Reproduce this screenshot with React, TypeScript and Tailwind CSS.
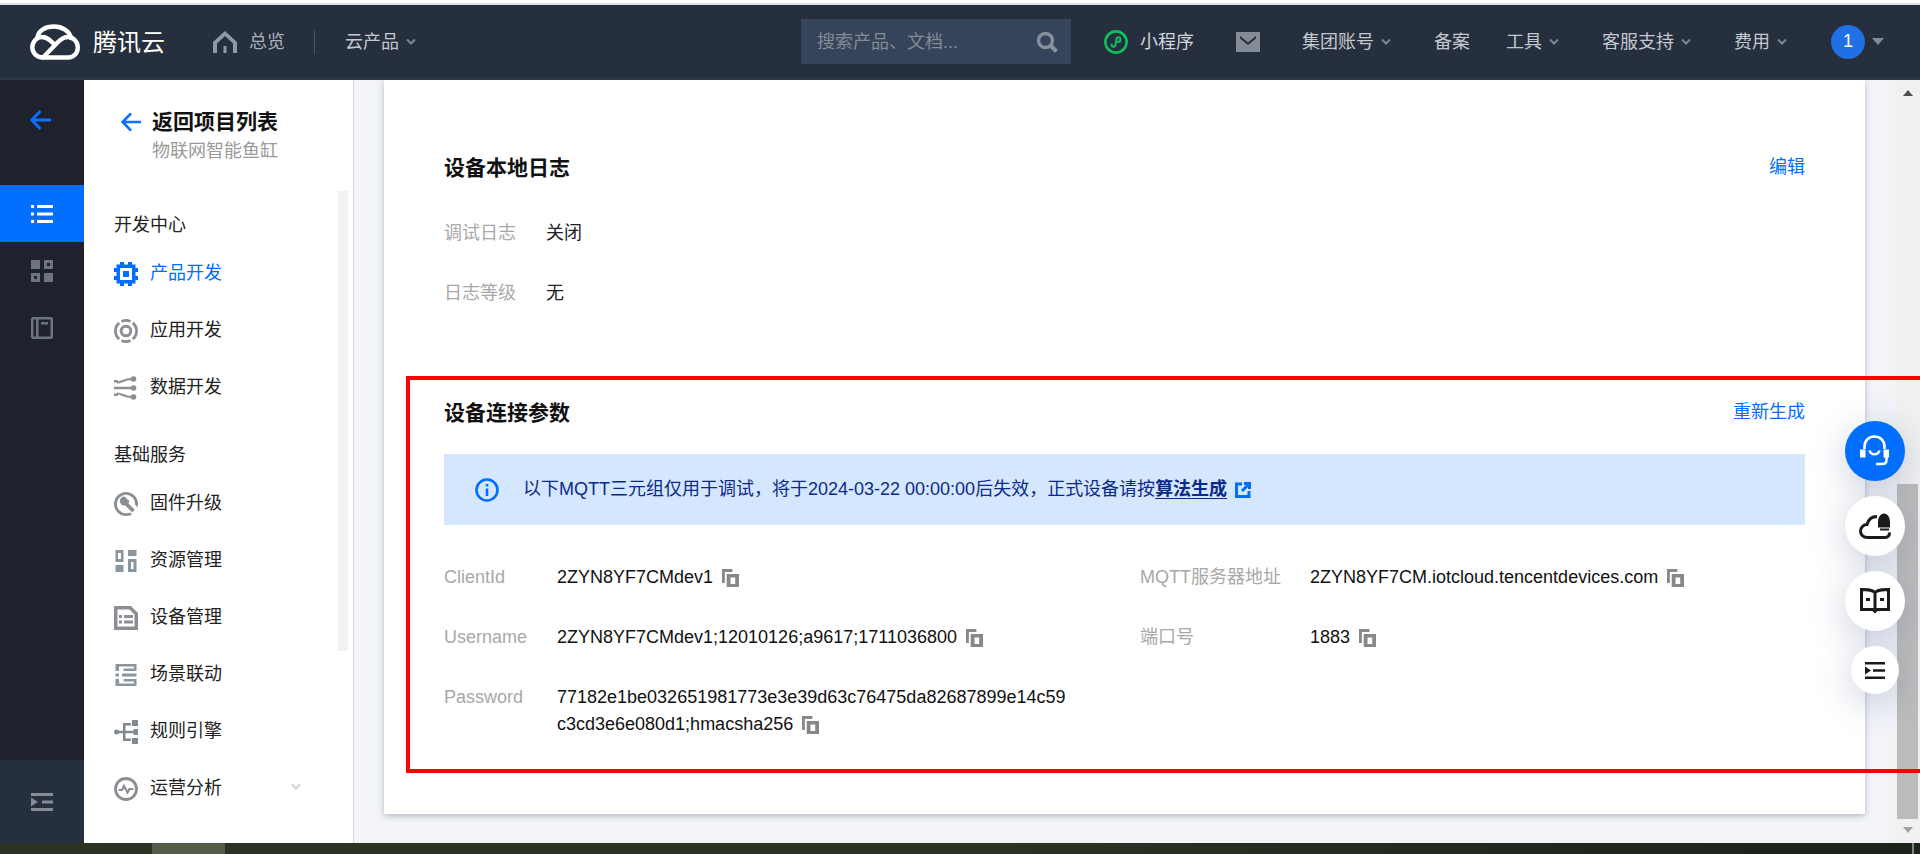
import type { ReactNode } from "react";

const FONT = "[font-family:'Liberation_Sans','Noto_Sans_CJK_SC',sans-serif]";

function Chevron({ className = "" }: { className?: string }) {
  return (
    <svg viewBox="0 0 10 8" className={`h-[8px] w-[10px] shrink-0 ${className}`} fill="none" stroke="currentColor" strokeWidth="2">
      <path d="M1 1.5 5 5.5 9 1.5" />
    </svg>
  );
}

function TopLink({ label, ml, chevron = true }: { label: string; ml: string; chevron?: boolean }) {
  return (
    <div className={`flex items-center ${ml}`}>
      <span className="pt-[2px] text-[18px] leading-[27px] text-[#c3c8d0]">{label}</span>
      {chevron && <Chevron className="ml-[7px] text-[#7d8693]" />}
    </div>
  );
}

function Header() {
  return (
    <header className="flex h-[75px] shrink-0 items-center border-b-2 border-[#2c3646] bg-[#262f3e] pl-[30px]">
      <svg viewBox="0 0 50 36" className="h-[36px] w-[50px] shrink-0" fill="none" stroke="#fff" strokeWidth="4.4" strokeLinecap="round">
        <path d="M7.500 12.500C9 6 16 2.500 24 2.500C32 2.500 39.500 7 41 14" />
        <path d="M13 33.500H38C44 33.500 47.800 29 47.800 23.500C47.800 17.500 43 13 38 13C34 13 31 15 28 18L13 33.500" />
        <path d="M13 33.500C7 33.500 2.300 29 2.300 23.500C2.300 17.500 7 13 12 13C17 13 20 16 24 20" />
      </svg>
      <span className="ml-[13px] pt-[3px] text-[24px] leading-[36px] text-white">腾讯云</span>
      <svg viewBox="0 0 24 22" className="ml-[48px] h-[22px] w-[24px] shrink-0" fill="#8f98a5">
        <path fillRule="evenodd" d="M12 0 24 11V22H20V12.500L12 5 4 12.500V22H0V11ZM10.500 15H13.500V22H10.500Z" />
      </svg>
      <span className="ml-[12px] pt-[2px] text-[18px] leading-[27px] text-[#a9b0ba]">总览</span>
      <div className="ml-[29px] h-[24px] w-px bg-[#4a5361]" />
      <TopLink label="云产品" ml="ml-[30px]" />
      <div className="ml-[385px] flex h-[45px] w-[270px] shrink-0 items-center justify-between bg-[#35445b] pl-[16px] pr-[13px]">
        <span className="pt-[2px] text-[18px] leading-[27px] text-[#858b94]">搜索产品、文档...</span>
        <svg viewBox="0 0 22 22" className="h-[22px] w-[22px]" fill="none" stroke="#87909b" strokeWidth="3.400">
          <circle cx="9.500" cy="9.500" r="7" />
          <path d="m14.500 14.500 6 6" strokeWidth="4" />
        </svg>
      </div>
      <svg viewBox="0 0 24 24" className="ml-[33px] h-[24px] w-[24px] shrink-0" fill="none">
        <circle cx="12" cy="12" r="10.600" stroke="#0dc15f" strokeWidth="2.600" />
        <path d="M7.500 14.500C7.500 17 10.500 17.500 11.500 15.500L12.500 8.500C13.500 6.500 16.500 7 16.500 9.500C16.500 11 15.500 12 14 12" stroke="#0dc15f" strokeWidth="2" strokeLinecap="round" />
      </svg>
      <span className="ml-[12px] pt-[2px] text-[18px] leading-[27px] text-[#d3d6db]">小程序</span>
      <svg viewBox="0 0 24 20" className="ml-[42px] h-[20px] w-[24px] shrink-0" fill="#848c97">
        <path fillRule="evenodd" d="M0 0H24V20H0ZM4 4 12 10.500 20 4V6.500L12 13 4 6.500Z" />
      </svg>
      <TopLink label="集团账号" ml="ml-[42px]" />
      <TopLink label="备案" ml="ml-[43px]" chevron={false} />
      <TopLink label="工具" ml="ml-[36px]" />
      <TopLink label="客服支持" ml="ml-[43px]" />
      <TopLink label="费用" ml="ml-[43px]" />
      <div className="ml-[44px] flex h-[34px] w-[34px] shrink-0 items-center justify-center rounded-full bg-[#1f6fe5] text-[18px] text-white">1</div>
      <div className="ml-[7px] h-0 w-0 border-x-[6px] border-t-[7px] border-x-transparent border-t-[#858c96]" />
    </header>
  );
}

function Rail() {
  return (
    <aside className="flex w-[84px] shrink-0 flex-col bg-[#1e222d]">
      <div className="flex h-[105px] shrink-0 items-center justify-center pb-[25px] pr-[3px]">
        <svg viewBox="0 0 22 20" className="h-[20px] w-[22px]" fill="none" stroke="#0f6fff" strokeWidth="2.800">
          <path d="M21 10H2M10.500 1 1.800 10l8.700 9" />
        </svg>
      </div>
      <div className="flex h-[57px] shrink-0 items-center justify-center bg-[#006eff]">
        <svg viewBox="0 0 22 18" className="h-[18px] w-[22px]" fill="#fff">
          <path d="M0 0H3V3H0ZM6 0H22V3H6ZM0 7.500H3V10.500H0ZM6 7.500H22V10.500H6ZM0 15H3V18H0ZM6 15H22V18H6Z" />
        </svg>
      </div>
      <div className="flex h-[57px] shrink-0 items-center justify-center">
        <svg viewBox="0 0 22 22" className="h-[22px] w-[22px]" fill="#6d747e">
          <path d="M0 0H9V9H0ZM13 13H22V22H13Z" />
          <path fillRule="evenodd" d="M13 0H22V9H13ZM16 3V6H19V3ZM0 13H9V22H0ZM3 16V19H6V16Z" />
        </svg>
      </div>
      <div className="flex h-[57px] shrink-0 items-center justify-center">
        <svg viewBox="0 0 22 22" className="h-[22px] w-[22px]" fill="#6d747e">
          <path fillRule="evenodd" d="M1.500 0H20.500L22 1.500V20.500L20.500 22H1.500L0 20.500V1.500ZM2.500 2.500V19.500H5V2.500ZM7.500 2.500V19.500H19.500V2.500ZM10 5H17V7.500H10Z" />
        </svg>
      </div>
      <div className="mt-auto flex h-[83px] shrink-0 items-center justify-center bg-[#262f3e]">
        <svg viewBox="0 0 22 18" className="h-[18px] w-[22px]" fill="#858c96">
          <path d="M0 0H22V3H0ZM0 15H22V18H0ZM0 4.500 7 9 0 13.500ZM11 7.500H22V10.500H11Z" />
        </svg>
      </div>
    </aside>
  );
}

const icons: Record<string, ReactNode> = {
  chip: (
    <svg viewBox="0 0 24 24" className="h-[24px] w-[24px]" fill="#006eff">
      <path fillRule="evenodd" d="M2.500 2.500H21.500V21.500H2.500ZM6 6V18H18V6ZM9 9H15V15H9ZM6 0H10V2.500H6ZM14 0H18V2.500H14ZM6 21.500H10V24H6ZM14 21.500H18V24H14ZM0 6H2.500V10H0ZM0 14H2.500V18H0ZM21.500 6H24V10H21.500ZM21.500 14H24V18H21.500Z" />
    </svg>
  ),
  ring: (
    <svg viewBox="0 0 24 24" className="h-[24px] w-[24px]" fill="none" stroke="#8b8f94">
      <circle cx="12" cy="12" r="4.800" strokeWidth="3" />
      <path d="M5.200 3.900A10.600 10.600 0 0 0 5.200 20.100M18.800 3.900A10.600 10.600 0 0 1 18.800 20.100M7.500 2.400A10.600 10.600 0 0 1 16.500 2.400M7.500 21.600A10.600 10.600 0 0 0 16.500 21.600" strokeWidth="2.800" />
    </svg>
  ),
  flow: (
    <svg viewBox="0 0 24 24" className="h-[24px] w-[24px]" fill="#8b8f94">
      <circle cx="19.500" cy="3" r="2.800" />
      <circle cx="19.500" cy="12" r="2.800" />
      <circle cx="19.500" cy="21" r="2.800" />
      <path d="M0 4H4V6.500H0ZM0 10.700H18V13.300H0ZM0 17.500H4V20H0Z" />
      <path d="M3 6.500C9 6.500 9 3 18 3M3 17.500C9 17.500 9 21 18 21" fill="none" stroke="#8b8f94" strokeWidth="2.200" />
    </svg>
  ),
  wrench: (
    <svg viewBox="0 0 24 24" className="h-[24px] w-[24px]" fill="none" stroke="#8b8f94">
      <circle cx="12" cy="12" r="10.600" strokeWidth="2.800" />
      <path d="M10 8 22 20" stroke="#fff" strokeWidth="9" />
      <path d="M10 9.500 19.500 19" strokeWidth="3.800" />
      <circle cx="10.500" cy="9" r="4.600" fill="#8b8f94" stroke="none" />
      <path d="M11 3 15 7.500" stroke="#fff" strokeWidth="2.400" />
    </svg>
  ),
  blocks: (
    <svg viewBox="0 0 24 24" className="h-[24px] w-[24px]" fill="#8b959e">
      <path fillRule="evenodd" d="M1.500 1H9.500V13H1.500ZM4 4V10H7V4ZM14 1H22.500V7H14ZM1.500 16H9.500V23H1.500ZM14 10H22.500V23H14ZM17 13V20H19.500V13Z" />
    </svg>
  ),
  device: (
    <svg viewBox="0 0 24 24" className="h-[24px] w-[24px]" fill="#8b8f94">
      <path fillRule="evenodd" d="M0 0H17L24 7V24H0ZM3.500 3.500V20.500H20.500V8.500L15.500 3.500ZM5 9H8V12H5ZM10 9H19V12H10ZM5 14.500H8V17.500H5ZM10 14.500H19V17.500H10Z" />
    </svg>
  ),
  scene: (
    <svg viewBox="0 0 24 24" className="h-[24px] w-[24px]" fill="#8b959e">
      <path fillRule="evenodd" d="M1.500 1H5V8H1.500ZM1.500 16H5V23H1.500ZM1.500 10.500H5V13.500H1.500ZM5 1H22.500V8H9.500V5.500H20V3.500H5ZM5 16H22.500V23H5V20.500H20V18.500H9.500V16ZM8 10.500H22.500V13.500H8Z" />
    </svg>
  ),
  tree: (
    <svg viewBox="0 0 24 24" className="h-[24px] w-[24px]" fill="#7f8a93">
      <circle cx="2.500" cy="12" r="2.500" />
      <path d="M2 10.700H22V13.300H2ZM9 3H17V5.500H11.500V18.500H17V21H9Z" />
      <path d="M18 0H24V6H18ZM18 18H24V24H18ZM19.500 9H24V15H19.500Z" />
    </svg>
  ),
  pulse: (
    <svg viewBox="0 0 24 24" className="h-[24px] w-[24px]" fill="none" stroke="#8b8f94">
      <circle cx="12" cy="12" r="10.500" strokeWidth="2.800" />
      <path d="M4.500 13H8L10 9 13.500 15.500 15.500 12H19.500" strokeWidth="2.200" />
    </svg>
  ),
};

function NavItem({ icon, label, active, chevron }: { icon: string; label: string; active?: boolean; chevron?: boolean }) {
  return (
    <div className="flex h-[57px] items-center pl-[30px]">
      {icons[icon]}
      <span className={`ml-[12px] text-[18px] leading-[27px] ${active ? "text-[#006eff]" : "text-[#222]"}`}>{label}</span>
      {chevron && <Chevron className="mb-[4px] ml-[69px] text-[#cfd1d4]" />}
    </div>
  );
}

function NavPanel() {
  return (
    <nav className="relative w-[270px] shrink-0 border-r border-[#d5d7dc] bg-white">
      <div className="absolute right-[5px] top-[111px] h-[460px] w-[10px] bg-[#f2f2f2]" />
      <div className="flex items-center pl-[37px] pt-[28px]">
        <svg viewBox="0 0 22 20" className="h-[20px] w-[21px] shrink-0" fill="none" stroke="#0f6fff" strokeWidth="2.800">
          <path d="M21 10H2M10.500 1 1.800 10l8.700 9" />
        </svg>
        <span className="ml-[10px] text-[21px] font-bold leading-[28px] text-[#111]">返回项目列表</span>
      </div>
      <div className="mt-[2px] pl-[68px] text-[18px] leading-[27px] text-[#999]">物联网智能鱼缸</div>
      <div className="mt-[47px] pl-[30px] text-[18px] leading-[27px] text-[#222]">开发中心</div>
      <div className="mt-[6px]">
        <NavItem icon="chip" label="产品开发" active />
        <NavItem icon="ring" label="应用开发" />
        <NavItem icon="flow" label="数据开发" />
      </div>
      <div className="mt-[26px] pl-[30px] text-[18px] leading-[27px] text-[#222]">基础服务</div>
      <div className="mt-[6px]">
        <NavItem icon="wrench" label="固件升级" />
        <NavItem icon="blocks" label="资源管理" />
        <NavItem icon="device" label="设备管理" />
        <NavItem icon="scene" label="场景联动" />
        <NavItem icon="tree" label="规则引擎" />
        <NavItem icon="pulse" label="运营分析" chevron />
      </div>
    </nav>
  );
}

function CopyIcon({ className = "" }: { className?: string }) {
  return (
    <svg viewBox="0 0 18 18" className={`inline-block h-[18px] w-[17px] shrink-0 align-[-4px] ${className}`} fill="#888" preserveAspectRatio="none">
      <path d="M0 0H11V3H3V14H0Z" />
      <path fillRule="evenodd" d="M5 5H18V18H5ZM9 8.500V15H14V8.500Z" />
    </svg>
  );
}

function Field({ label, labelWidth, children }: { label: string; labelWidth: string; children: ReactNode }) {
  return (
    <div className="mb-[33px] flex text-[18px] leading-[27px]">
      <span className={`shrink-0 text-[#a8a8a8] ${labelWidth}`}>{label}</span>
      <div className="text-[#111]">{children}</div>
    </div>
  );
}

function Card() {
  return (
    <section className="h-[734px] w-[1481px] bg-white px-[60px] pt-[74px] shadow-[0_2px_6px_rgba(54,58,80,0.32)]">
      <div className="flex items-center justify-between">
        <h2 className="text-[21px] font-bold leading-[27px] text-[#111]">设备本地日志</h2>
        <span className="text-[18px] leading-[27px] text-[#006eff]">编辑</span>
      </div>
      <div className="mt-[39px] flex text-[18px] leading-[27px]">
        <span className="w-[102px] text-[#a8a8a8]">调试日志</span>
        <span className="text-[#222]">关闭</span>
      </div>
      <div className="mt-[33px] flex text-[18px] leading-[27px]">
        <span className="w-[102px] text-[#a8a8a8]">日志等级</span>
        <span className="text-[#222]">无</span>
      </div>
      <div className="mt-[92px] flex items-center justify-between">
        <h2 className="text-[21px] font-bold leading-[27px] text-[#111]">设备连接参数</h2>
        <span className="text-[18px] leading-[27px] text-[#006eff]">重新生成</span>
      </div>
      <div className="mt-[28px] flex h-[71px] items-center bg-[#d5e7ff] pl-[31px] text-[18px] leading-[27px] text-[#0b2a8a]">
        <svg viewBox="0 0 24 24" className="h-[24px] w-[24px] shrink-0" fill="none" stroke="#006eff">
          <circle cx="12" cy="12" r="10.500" strokeWidth="2.600" />
          <path d="M12 10.500V18" strokeWidth="2.600" />
          <path d="M12 6V8.500" strokeWidth="2.600" />
        </svg>
        <span className="ml-[24px]">
          以下MQTT三元组仅用于调试，将于2024-03-22 00:00:00后失效，正式设备请按<span className="font-bold underline underline-offset-[3px]">算法生成</span>
        </span>
        <svg viewBox="0 0 16 16" className="ml-[8px] h-[16px] w-[16px] shrink-0" fill="none" stroke="#006eff" strokeWidth="3">
          <path d="M7 2H1.500V14.500H14V9M9 1.500H14.500V7M14 2 7 9" />
        </svg>
      </div>
      <div className="mt-[39px] flex">
        <div className="w-[696px]">
          <Field label="ClientId" labelWidth="w-[113px]">
            2ZYN8YF7CMdev1 <CopyIcon className="ml-[4px]" />
          </Field>
          <Field label="Username" labelWidth="w-[113px]">
            2ZYN8YF7CMdev1;12010126;a9617;1711036800 <CopyIcon className="ml-[4px]" />
          </Field>
          <Field label="Password" labelWidth="w-[113px]">
            <div className="w-[512px] break-all">
              77182e1be032651981773e3e39d63c76475da82687899e14c59c3cd3e6e080d1;hmacsha256 <CopyIcon className="ml-[4px]" />
            </div>
          </Field>
        </div>
        <div>
          <Field label="MQTT服务器地址" labelWidth="w-[170px]">
            2ZYN8YF7CM.iotcloud.tencentdevices.com <CopyIcon className="ml-[4px]" />
          </Field>
          <Field label="端口号" labelWidth="w-[170px]">
            1883 <CopyIcon className="ml-[4px]" />
          </Field>
        </div>
      </div>
    </section>
  );
}

function Scrollbar() {
  return (
    <div className="flex w-[25px] shrink-0 flex-col items-center bg-[#f1f1f1]">
      <div className="mt-[10px] h-0 w-0 border-x-[5.500px] border-b-[6px] border-x-transparent border-b-[#505050]" />
      <div className="mt-[388px] h-[335px] w-[21px] bg-[#bcbcbc]" />
      <div className="mt-[8px] h-0 w-0 border-x-[5.500px] border-t-[6px] border-x-transparent border-t-[#a3a3a3]" />
    </div>
  );
}

function FloatButtons() {
  const shadow = "shadow-[0_8px_36px_rgba(60,80,125,0.28)]";
  return (
    <div className="absolute left-[1845px] top-[421px] flex w-[60px] flex-col items-center gap-[15px]">
      <div className={`flex h-[60px] w-[60px] items-center justify-center rounded-full bg-[#006eff] ${shadow}`}>
        <svg viewBox="0 0 32 32" className="h-[32px] w-[32px]" fill="none" stroke="#fff" strokeWidth="2.600">
          <path d="M5.500 14V11.500C5.500 5.500 10 1.500 15.500 1.500C21 1.500 25.500 5.500 25.500 11.500V14" />
          <path d="M1 14.500H6.500V22.500H1ZM24.500 14.500H30V22.500H24.500Z" fill="#fff" stroke="none" />
          <path d="M10.500 15.500C12 20.500 19 20.500 20.500 15.500" />
          <path d="M27.500 22V25C27.500 28 26 29 23.500 29H17" />
        </svg>
      </div>
      <div className={`flex h-[60px] w-[60px] items-center justify-center rounded-full bg-white ${shadow}`}>
        <svg viewBox="0 0 32 26" className="h-[26px] w-[32px]">
          <path d="M9 24.500H26C29 24.500 30.500 23 30.500 19.500M9 24.500C3.500 24.500 1.500 21 1.500 18C1.500 14.500 4.500 11.500 8 11.500C9.500 6 13 3.500 18 3.500" fill="none" stroke="#1a1a1a" strokeWidth="3" />
          <path d="M19 14.500V9C19 4.500 21.500 0.500 25 0.500C28.500 0.500 31 4.500 31 9V14.500ZM21 15.500H30V17.500H21Z" fill="#1a1a1a" />
        </svg>
      </div>
      <div className={`flex h-[60px] w-[60px] items-center justify-center rounded-full bg-white ${shadow}`}>
        <svg viewBox="0 0 30 26" className="h-[26px] w-[30px]" fill="none" stroke="#1a1a1a" strokeWidth="3">
          <path d="M15 4.500C12 1.500 8 1.500 1.500 1.500V21.500H13L15 23.500L17 21.500H28.500V1.500C22 1.500 18 1.500 15 4.500V21" />
          <path d="M6 10H10V13H6ZM20 10H24V13H20Z" fill="#1a1a1a" stroke="none" />
        </svg>
      </div>
      <div className={`flex h-[48px] w-[48px] items-center justify-center rounded-full bg-white ${shadow}`}>
        <svg viewBox="0 0 20 17" className="h-[17px] w-[20px]" fill="#1a1a1a">
          <path d="M0 0H20V2.500H0ZM0 14.500H20V17H0ZM0 4.500 6 8.500 0 12.500ZM8 7.200H20V9.800H8Z" />
        </svg>
      </div>
    </div>
  );
}

export default function App() {
  return (
    <div className={`relative flex h-[854px] w-[1920px] flex-col overflow-hidden bg-white ${FONT}`}>
      <div className="h-[3px] shrink-0 bg-white" />
      <div className="h-[2px] shrink-0 bg-[#dfdfdf]" />
      <Header />
      <div className="flex h-[763px] shrink-0">
        <Rail />
        <NavPanel />
        <main className="flex flex-1 overflow-hidden bg-[#f2f4f8]">
          <div className="flex-1 pl-[30px]">
            <Card />
          </div>
          <Scrollbar />
        </main>
      </div>
      <div className="flex h-[11px] shrink-0 overflow-hidden bg-[#1c241c]">
        <div className="h-full w-[152px] bg-[#2c3322]" />
        <div className="h-full w-[73px] bg-[#545c48]" />
        <div className="h-full flex-1 bg-linear-to-r from-[#2c3322] from-50% to-[#1c241c]" />
        <div className="flex w-[155px] items-start bg-[#1c241c]">
          <span className="mt-[8px] w-[147px] text-[15px] leading-[18px] text-white">0:36</span>
          <div className="h-full w-[2px] bg-[#7d857d]" />
        </div>
      </div>
      <FloatButtons />
      <div className="pointer-events-none absolute left-[406px] top-[376px] h-[397px] w-[1530px] border-4 border-[#ff0000]" />
    </div>
  );
}
